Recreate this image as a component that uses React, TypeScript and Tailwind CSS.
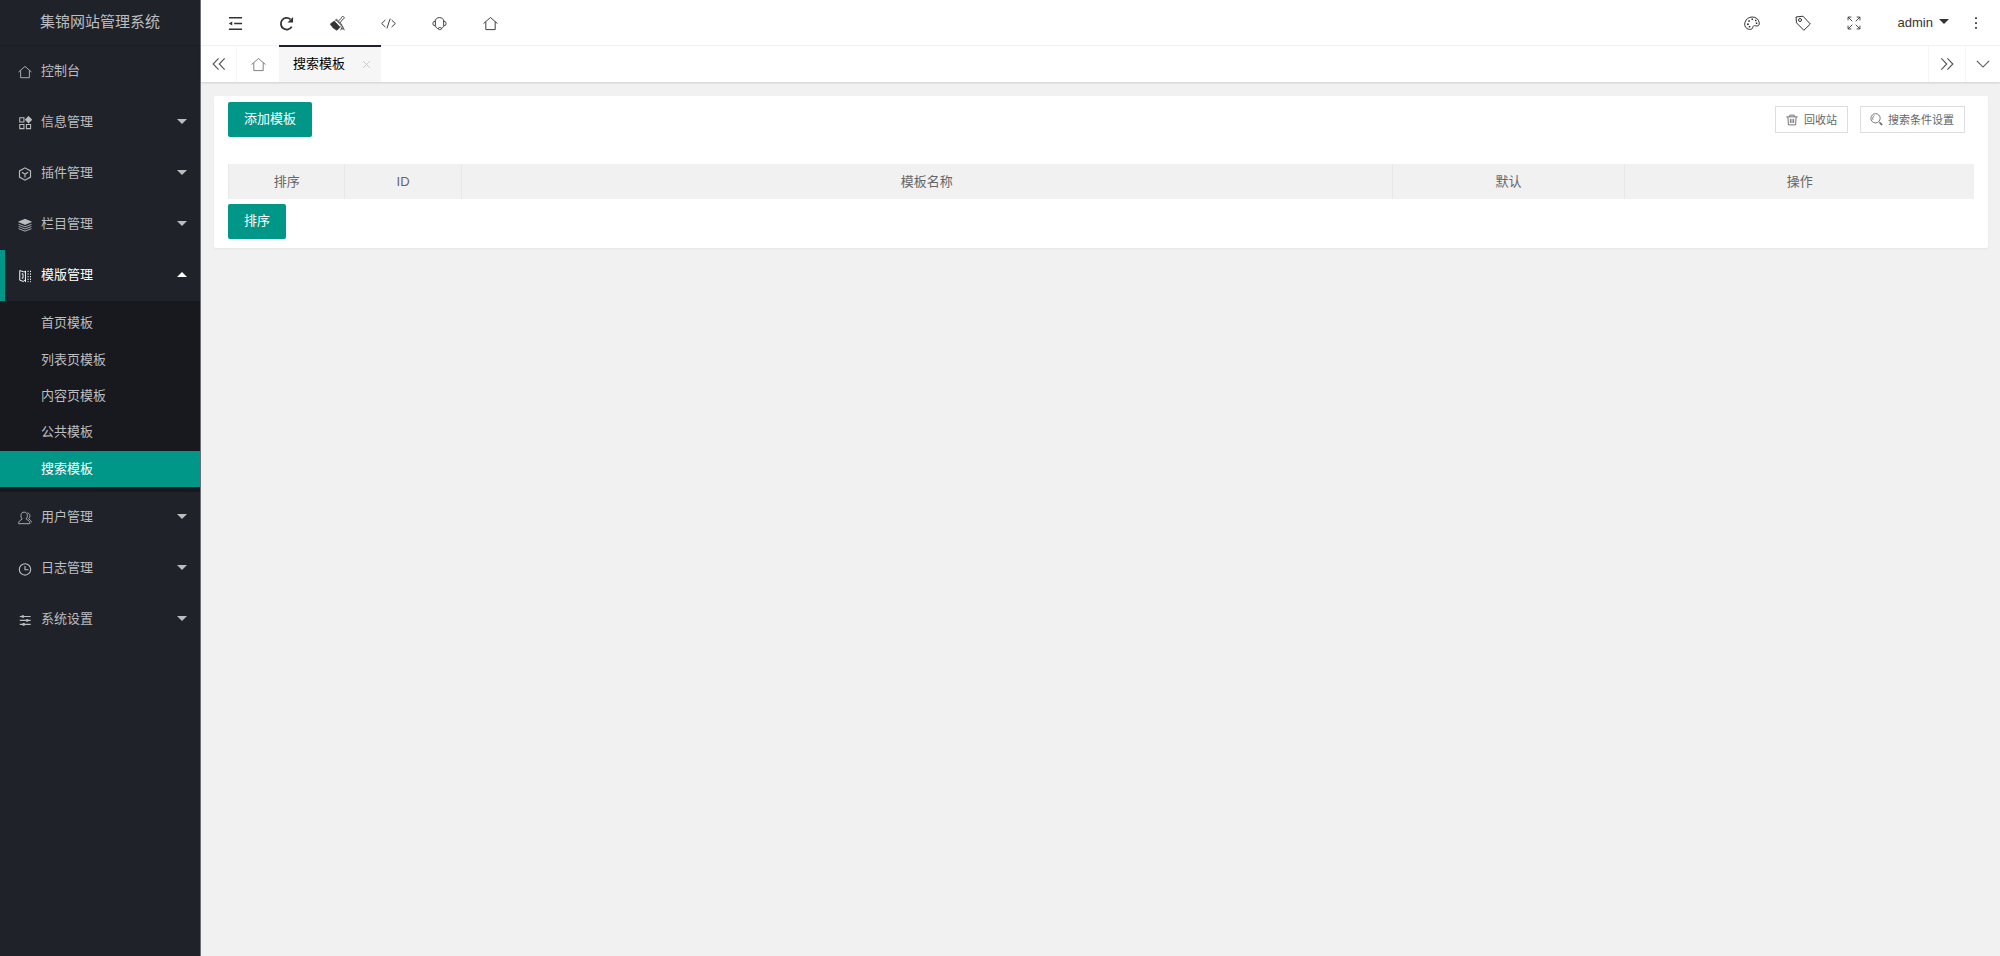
import type { ReactNode } from "react";

type IconProps = { children: ReactNode; className?: string; width?: number };

function Icon({ children, className = "size-[15px]", width = 1 }: IconProps) {
  return (
    <svg
      viewBox="0 0 16 16"
      className={`shrink-0 ${className}`}
      fill="none"
      stroke="currentColor"
      strokeWidth={width}
      aria-hidden="true"
    >
      {children}
    </svg>
  );
}

const house = <path d="M.6 8 8 1.6 15.400 8M3 6.200v8.300h10V6.200" />;

const HomeIcon = ({ className }: { className?: string }) => (
  <Icon className={className}>{house}</Icon>
);

const icons = {
  console: <HomeIcon className="size-[14px]" />,
  info: (
    <Icon className="size-[14px]" width={1.2}>
      <path d="M2 2h4.800v4.800H2zM2 9.600h4.800v4.800H2zM9.600 9.600h4.800v4.800H9.600z" />
      <path d="m12 .8 3.400 3.500L12 7.800 8.600 4.300z" fill="currentColor" />
    </Icon>
  ),
  plugin: (
    <Icon className="size-[14px]" width={1.3}>
      <path d="m8 1 6.300 3.500v7L8 15l-6.300-3.500v-7zM4.500 6 8 8.300 11.500 6M8 8.300V12" />
    </Icon>
  ),
  columns: (
    <Icon className="size-[14px]">
      <path d="m8 1.500 7.200 2.900L8 7.300.8 4.400z" fill="currentColor" />
      <path d="M.6 7.200 8 10l7.400-2.800M.6 9.700 8 12.500l7.400-2.800M.6 12.200 8 15l7.400-2.800" />
    </Icon>
  ),
  template: (
    <Icon className="size-[14px]" width={1.1}>
      <path d="M6.500 3.200 2 1.800v11l4.500 1.600M6.500 3.200H9M6.500 13H9M4.300 5.500h1.400v5H4.300M8.500 2v13" />
      <path d="M11.500 2v13M14.300 2v13" strokeDasharray="1.500 1.500" />
    </Icon>
  ),
  user: (
    <Icon className="size-[14px]">
      <path d="M4.800 9C3.400 7.500 3.200 5.800 3.500 4.300 3.900 2.300 5 1.300 7 1.300s3.300 1 3.600 3c.3 1.700 0 3.300-1.400 4.700l3 2.200c1 .7 1.300 1.600 1.300 3.300H.7c0-1.700.4-2.600 1.400-3.300z" />
      <path d="M10.800 2.200c1.600.3 2.600 1.300 2.800 2.900.1 1.500-.4 2.700-1.500 3.700l2 1.700c.8.700 1.200 1.500 1.300 2.500" />
    </Icon>
  ),
  log: (
    <Icon className="size-[14px]" width={1.3}>
      <circle cx="8" cy="8.500" r="6.500" />
      <path d="M8 4.500v4.300h4" />
    </Icon>
  ),
  settings: (
    <Icon className="size-[14px]" width={1.4}>
      <path d="M2 4h12.500M2 8.500h12.500M2 13h12.500" />
      <path d="M5.500 2.500v3M10.500 7v3M6.500 11.500v3" strokeWidth={2.4} />
    </Icon>
  ),
};

type NavItem = { label: string; icon: ReactNode; leaf?: boolean; children?: string[] };

const nav: NavItem[] = [
  { label: "控制台", icon: icons.console, leaf: true },
  { label: "信息管理", icon: icons.info },
  { label: "插件管理", icon: icons.plugin },
  { label: "栏目管理", icon: icons.columns },
  {
    label: "模版管理",
    icon: icons.template,
    children: ["首页模板", "列表页模板", "内容页模板", "公共模板", "搜索模板"],
  },
  { label: "用户管理", icon: icons.user },
  { label: "日志管理", icon: icons.log },
  { label: "系统设置", icon: icons.settings },
];

function Caret({ up = false }: { up?: boolean }) {
  return (
    <svg viewBox="0 0 10 5" className="mb-[2px] h-[5px] w-[10px] shrink-0" fill="currentColor" aria-hidden="true">
      <path d={up ? "M0 5 5 0l5 5z" : "M0 0h10L5 5z"} />
    </svg>
  );
}

function Sidebar() {
  return (
    <aside className="w-[201px] shrink-0 border-r border-[#6b6d72] bg-[#20222a] text-[#bcbdbf]">
      <div className="flex h-[46px] items-center justify-center border-b border-[#1b1d24] pb-px text-[15px]">
        集锦网站管理系统
      </div>
      <nav aria-label="主菜单">
        <ul>
          {nav.map((item) => (
            <li key={item.label}>
              <a
                href="#"
                className={`flex h-[51px] items-center border-l-[5px] px-[13px] ${
                  item.children ? "border-[#009688] text-white" : "border-transparent"
                }`}
              >
                {item.icon}
                <span className="ml-[9px] flex-1 pb-[2px]">{item.label}</span>
                {!item.leaf && <Caret up={!!item.children} />}
              </a>
              {item.children && (
                <ul className="flex h-[191px] flex-col bg-[#18191f] pt-1 pb-[5px]">
                  {item.children.map((child) => (
                    <li key={child} className="flex-1">
                      <a
                        href="#"
                        className={`flex h-full items-center pl-[41px] ${
                          child === "搜索模板" ? "bg-[#009688] text-white" : ""
                        }`}
                      >
                        {child}
                      </a>
                    </li>
                  ))}
                </ul>
              )}
            </li>
          ))}
        </ul>
      </nav>
    </aside>
  );
}

function BarButton({ label, children }: { label: string; children: ReactNode }) {
  return (
    <button type="button" aria-label={label} className="flex h-full w-[51px] items-center justify-center">
      {children}
    </button>
  );
}

function TopBar() {
  return (
    <header className="flex h-[46px] items-center justify-between border-b border-[#f3f3f3] bg-white text-[#333]">
      <div className="flex h-full pt-px pl-[9px]">
        <BarButton label="收起菜单">
          <Icon width={1.3}>
            <path d="M1 1.800h14M6.500 8H15M1 14.200h14" strokeWidth={1.5} />
            <path d="M.8 8l3.700-2.200v4.400z" fill="currentColor" stroke="none" />
          </Icon>
        </BarButton>
        <BarButton label="刷新">
          <Icon width={1.9}>
            <path d="M13.600 11.300A6.200 6.200 0 1 1 12.200 3.500" />
            <path d="M15 1v6H9z" fill="currentColor" stroke="none" />
          </Icon>
        </BarButton>
        <BarButton label="清除缓存">
          <Icon width={0.9}>
            <path d="M.6 8.300 4.600 5.500l6 6.500-3.200 3.200-1.500-1-.5.200-1-1.500-1.300-.2-.4-1.700-1.500-.7z" fill="currentColor" />
            <path d="M5.200 5 7 3.300l6 6.400-1.700 1.700M6.300 4.200l6 6.300" />
            <path d="m9 5.400 3.200-3.300c-.1-1 .5-1.600 1.400-1.600s1.700.6 1.600 1.500-.8 1.500-1.700 1.500L10.800 7.200" />
            <path d="m13.300 10.800-1.900 4.400M13.300 10.800l2 4.400M12.200 13.700h2.300" width={1} />
          </Icon>
        </BarButton>
        <BarButton label="源代码">
          <Icon>
            <path d="M4.700 4.200.7 8l4 3.800M11.300 4.200l4 3.800-4 3.800M9.800 2.800 6.300 13.200" />
          </Icon>
        </BarButton>
        <BarButton label="客服">
          <Icon>
            <path d="M3.200 6C3.600 3.200 5.300 1.700 8 1.700S12.400 3.200 12.800 6" />
            <path d="M3.600 5.800v4.500H2.200C1.300 10 1 9.200 1 8.100s.3-2 1.200-2.300zM12.400 5.800v4.500h1.400c.9-.3 1.200-1.100 1.200-2.200s-.3-2-1.200-2.300z" />
            <path d="M3.600 10.300c.5 1.800 1.500 2.900 3.200 3.200M12.400 10.300c-.3 1.600-1 2.600-2.400 3" />
            <rect x="6.800" y="12.300" width="3.200" height="2.200" rx="1" />
          </Icon>
        </BarButton>
        <BarButton label="网站首页">
          <HomeIcon />
        </BarButton>
      </div>
      <div className="flex h-full items-center">
        <BarButton label="主题">
          <Icon className="size-4">
            <path d="M3 13.500C.8 12.300.3 9.800 1 7.300 2 4 4.800 2 8.300 2s6.500 2.200 6.900 5.600c.3 2-.5 3.400-2 3.400-1.400 0-2.400-.8-3.600-.1-1 .7-.5 2-1.700 3-1.300 1-3.500.5-4.900-.4z" />
            <path d="M3 9.200h1.800M4.300 6h1.600M7.500 4.200h1.600M11 5.500h1.500M11.800 8.200h1.500M4.800 11.800h1.500" strokeWidth={1.6} />
          </Icon>
        </BarButton>
        <BarButton label="便签">
          <Icon className="size-4">
            <path d="m1 2 .5 5.800 7.300 7.500 6.500-6.300L8 1.200z" />
            <circle cx="5" cy="5" r="1.500" />
          </Icon>
        </BarButton>
        <BarButton label="全屏">
          <Icon className="size-[14px]">
            <path d="M1.200 5V1.200H5M1.200 1.200 6 6M11 1.200h3.800V5M14.800 1.200 10 6M1.200 11v3.800H5M1.200 14.800 6 10M11 14.800h3.800V11M14.800 14.800 10 10" />
          </Icon>
        </BarButton>
        <button type="button" className="flex h-full items-center gap-[6px] pr-[3px] pl-[18px]">
          admin
          <Caret />
        </button>
        <button type="button" aria-label="更多" className="flex h-full w-12 items-center justify-center pt-px">
          <Icon className="size-[14px]">
            <path d="M7 1.500h2v2H7zM7 7h2v2H7zM7 12.500h2v2H7z" fill="currentColor" stroke="none" />
          </Icon>
        </button>
      </div>
    </header>
  );
}

function TabBar() {
  return (
    <div className="relative flex h-9 bg-white text-[#555] shadow-[0_1px_2px_0_rgba(0,0,0,0.15)]">
      <button type="button" aria-label="向左滚动" className="flex w-9 items-center justify-center border-r border-[#f6f6f6]">
        <Icon className="size-[14px]" width={1.3}>
          <path d="M7.500 1.500 1.300 8l6.200 6.500M14.500 1.500 8.300 8l6.200 6.500" />
        </Icon>
      </button>
      <button type="button" aria-label="主页" className="flex w-[42px] items-center justify-center text-[#777]">
        <HomeIcon />
      </button>
      <div className="-mt-px flex items-center gap-[15px] border-t-2 border-[#20222a] bg-[#f6f6f6] pr-[9px] pb-px pl-[14px]">
        <a href="#" className="text-black">
          搜索模板
        </a>
        <button type="button" aria-label="关闭标签" className="flex size-3 items-center justify-center text-[#c2c2c2]">
          <Icon className="size-[9px]" width={1.5}>
            <path d="m2 2 12 12M14 2 2 14" />
          </Icon>
        </button>
      </div>
      <div className="ml-auto flex">
        <button type="button" aria-label="向右滚动" className="flex w-[37px] items-center justify-center border-l border-[#f6f6f6]">
          <Icon className="size-[14px]" width={1.3}>
            <path d="M1.500 1.500 7.700 8l-6.200 6.500M8.500 1.500 14.700 8l-6.200 6.500" />
          </Icon>
        </button>
        <button type="button" aria-label="标签操作" className="flex w-[35px] items-center justify-center border-l border-[#f6f6f6]">
          <Icon className="size-[14px]" width={1.3}>
            <path d="m1 4.500 7 7 7-7" />
          </Icon>
        </button>
      </div>
    </div>
  );
}

const columns = [
  { title: "排序", width: "w-1/15" },
  { title: "ID", width: "w-1/15" },
  { title: "模板名称", width: "w-8/15" },
  { title: "默认", width: "w-2/15" },
  { title: "操作", width: "w-3/15" },
];

const primary = "h-[35px] rounded-[2px] bg-[#009688] px-4 pb-px text-white";
const outline =
  "flex h-[27px] items-center gap-[6px] border border-[#dedede] bg-white px-[10px] text-[11px] text-[#666]";

function TemplatePanel() {
  return (
    <section className="mt-[14px] mr-3 ml-[13px] rounded-[2px] bg-white px-[14px] pt-[6px] pb-[9px] shadow-[0_1px_2px_0_rgba(0,0,0,0.05)]">
      <div className="flex items-center justify-between pr-[9px]">
        <button type="button" className={primary}>
          添加模板
        </button>
        <div className="flex gap-3">
          <button type="button" className={outline}>
            <Icon className="size-3" width={1.2}>
              <path d="M.5 3.800h15M5 3.500V1.500h6v2M2.500 4l.7 10.500h9.600L13.500 4M5.800 6.500v5.500M8 6.500v5.500M10.200 6.500v5.500" />
            </Icon>
            回收站
          </button>
          <button type="button" className={outline}>
            <Icon className="-mx-px size-[13px]" width={1.1}>
              <circle cx="6.800" cy="6.500" r="5.700" />
              <path d="M3.800 8.300A3.500 3.500 0 0 1 5.500 3.300M10.800 10.700l1.200 1.100" />
              <path d="m12 11.800 3 3" strokeWidth={2} />
            </Icon>
            搜索条件设置
          </button>
        </div>
      </div>
      <table className="mt-[27px] w-full table-fixed border-collapse text-[#666]">
        <thead>
          <tr className="h-[35px] bg-[#f1f1f1]">
            {columns.map((column) => (
              <th
                key={column.title}
                scope="col"
                className={`${column.width} border-l border-[#e8e8e8] p-0 text-center font-normal`}
              >
                {column.title}
              </th>
            ))}
          </tr>
        </thead>
      </table>
      <button type="button" className={`${primary} mt-[5px] block`}>
        排序
      </button>
    </section>
  );
}

export default function App() {
  return (
    <div className="flex min-h-screen bg-[#f1f1f1] font-['Liberation_Sans','Noto_Sans_CJK_SC',sans-serif] text-[13px] leading-5">
      <Sidebar />
      <div className="min-w-0 flex-1">
        <TopBar />
        <TabBar />
        <main>
          <TemplatePanel />
        </main>
      </div>
    </div>
  );
}
